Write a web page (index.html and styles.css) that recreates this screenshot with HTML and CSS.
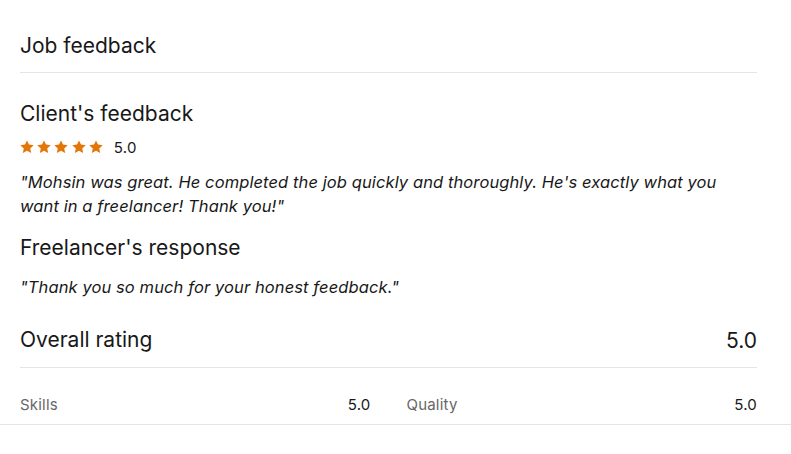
FILE: index.html
```html
<!DOCTYPE html>
<html lang="en">
<head>
<meta charset="utf-8">
<title>Job feedback</title>
<link rel="stylesheet" href="styles.css">
</head>
<body>
<div class="page">
  <section class="card">
    <h2 class="title">Job feedback</h2>
    <div class="body">
      <h3 class="heading">Client's feedback</h3>
      <div class="stars-row">
        <div class="stars">
          <svg class="star" viewBox="0 0 14 14"><path d="M7 0.4l2 4.2 4.7 0.6-3.5 3.2 1 4.6L7 10.7l-4.2 2.3 1-4.6L0.3 5.2l4.7-0.6z"/></svg>
          <svg class="star" viewBox="0 0 14 14"><path d="M7 0.4l2 4.2 4.7 0.6-3.5 3.2 1 4.6L7 10.7l-4.2 2.3 1-4.6L0.3 5.2l4.7-0.6z"/></svg>
          <svg class="star" viewBox="0 0 14 14"><path d="M7 0.4l2 4.2 4.7 0.6-3.5 3.2 1 4.6L7 10.7l-4.2 2.3 1-4.6L0.3 5.2l4.7-0.6z"/></svg>
          <svg class="star" viewBox="0 0 14 14"><path d="M7 0.4l2 4.2 4.7 0.6-3.5 3.2 1 4.6L7 10.7l-4.2 2.3 1-4.6L0.3 5.2l4.7-0.6z"/></svg>
          <svg class="star" viewBox="0 0 14 14"><path d="M7 0.4l2 4.2 4.7 0.6-3.5 3.2 1 4.6L7 10.7l-4.2 2.3 1-4.6L0.3 5.2l4.7-0.6z"/></svg>
        </div>
        <span class="score">5.0</span>
      </div>
      <p class="quote">"Mohsin was great. He completed the job quickly and thoroughly. He's exactly what you want in a freelancer! Thank you!"</p>
      <h3 class="heading response">Freelancer's response</h3>
      <p class="quote">"Thank you so much for your honest feedback."</p>
    </div>
    <div class="overall">
      <h3 class="heading">Overall rating</h3>
      <span class="overall-score">5.0</span>
    </div>
    <div class="details">
      <div class="detail"><span class="label">Skills</span><span class="value">5.0</span></div>
      <div class="detail"><span class="label">Quality</span><span class="value">5.0</span></div>
    </div>
  </section>
</div>
</body>
</html>
```
FILE: styles.css
```css
* { box-sizing: border-box; }
html, body { margin: 0; padding: 0; background: #fff; }
body {
  font-family: Inter, "Liberation Sans", Arial, sans-serif;
  color: #181818;
}
.page { border-bottom: 1px solid #e4e4e4; }
.card { padding: 0 34px 0 20px; }
.title {
  margin: 0;
  font-size: 21px;
  font-weight: 400;
  line-height: 28px;
  padding: 32px 0 12px;
  border-bottom: 1px solid #e4e4e4;
}
.body { padding-top: 27px; }
.heading {
  margin: 0;
  font-size: 21px;
  font-weight: 400;
  line-height: 28px;
}
.stars-row {
  display: flex;
  align-items: center;
  gap: 11px;
  margin-top: 9px;
  height: 20px;
}
.stars { display: flex; gap: 3.2px; }
.star { width: 14px; height: 14px; fill: #e37607; }
.score { font-size: 15px; letter-spacing: 0.3px; }
.quote {
  margin: 13px 0 0;
  font-size: 16.5px;
  font-style: italic;
  line-height: 24px;
  letter-spacing: 0.1px;
}
.response { margin-top: 16px; }
.overall {
  display: flex;
  justify-content: space-between;
  align-items: center;
  margin-top: 27px;
  padding-bottom: 13px;
  border-bottom: 1px solid #e4e4e4;
}
.overall-score { font-size: 21px; }
.details {
  display: grid;
  grid-template-columns: 1fr 1fr;
  column-gap: 36px;
  padding: 27px 0 9px;
}
.detail {
  display: flex;
  justify-content: space-between;
  align-items: center;
  font-size: 15px;
  line-height: 20px;
  letter-spacing: 0.2px;
}
.label { color: #676767; }
.value { color: #181818; }
```
